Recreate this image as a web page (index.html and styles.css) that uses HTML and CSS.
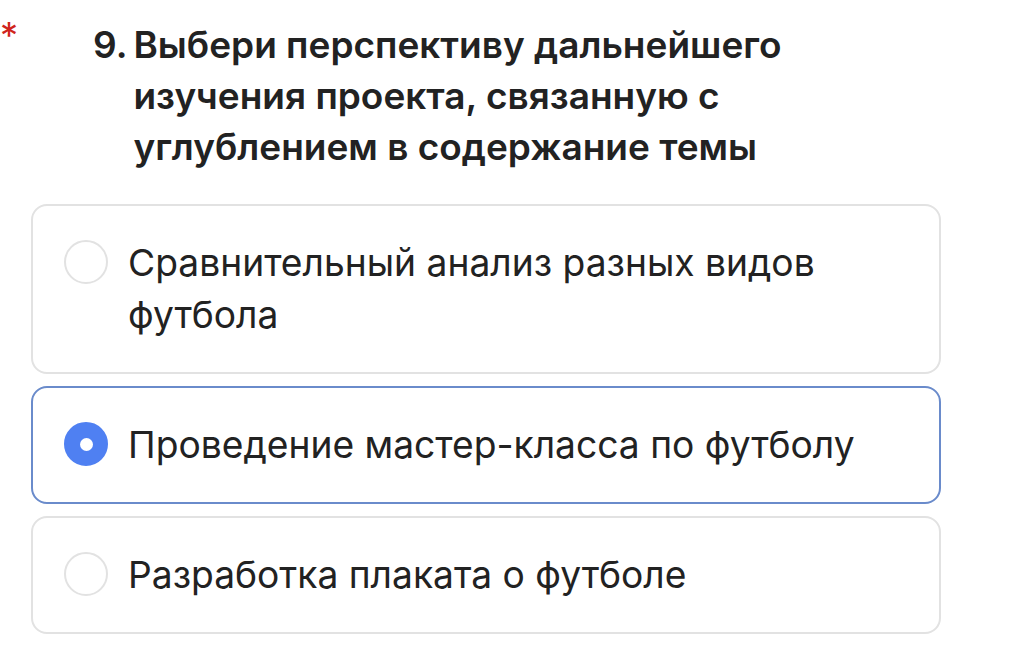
FILE: index.html
```html
<!DOCTYPE html>
<html lang="ru">
<head>
    <meta charset="UTF-8">
    <meta name="viewport" content="width=device-width, initial-scale=1.0">
    <title>Вопрос 9</title>
    <link rel="stylesheet" href="styles.css">
</head>
<body>
    <div class="question">
        <span class="required">*</span>
        <div class="question-title">
            <span class="question-num">9.</span>
            <span class="question-text">Выбери перспективу дальнейшего изучения проекта, связанную с углублением в содержание темы</span>
        </div>

        <div class="options">
            <label class="option">
                <span class="radio"></span>
                <span class="option-text">Сравнительный анализ разных видов футбола</span>
            </label>
            <label class="option option-checked">
                <span class="radio radio-checked"></span>
                <span class="option-text">Проведение мастер-класса по футболу</span>
            </label>
            <label class="option">
                <span class="radio"></span>
                <span class="option-text">Разработка плаката о футболе</span>
            </label>
        </div>
    </div>
</body>
</html>
```

FILE: styles.css
```css
body {
    font-family: Inter, "Noto Sans", sans-serif;
    background: #fff;
    color: #222;
    margin: 0;
}
.question {
    position: relative;
    padding: 19px 68px 0 31px;
}
.required {
    position: absolute;
    left: 0;
    top: 17px;
    color: #d0241c;
    font-size: 36px;
    line-height: 1;
}
.question-title {
    display: flex;
    gap: 6px;
    padding-left: 62px;
    font-size: 37px;
    font-weight: 600;
    line-height: 51px;
    margin-bottom: 32px;
}
.question-num {
    flex-shrink: 0;
}
.options {
    display: flex;
    flex-direction: column;
    gap: 12px;
}
.option {
    display: flex;
    align-items: flex-start;
    gap: 20px;
    padding: 31px;
    border: 2px solid #e2e2e2;
    border-radius: 16px;
}
.option-checked {
    border-color: #6a8bcb;
}
.radio {
    flex-shrink: 0;
    width: 44px;
    height: 44px;
    margin-top: 3px;
    border: 2px solid #e2e2e2;
    border-radius: 50%;
    box-sizing: border-box;
}
.radio-checked {
    background: #4f80f2;
    border-color: #4f80f2;
    display: flex;
    align-items: center;
    justify-content: center;
}
.radio-checked::after {
    content: "";
    width: 13px;
    height: 13px;
    border-radius: 50%;
    background: #fff;
}
.option-text {
    font-size: 37.2px;
    line-height: 52px;
}
```
